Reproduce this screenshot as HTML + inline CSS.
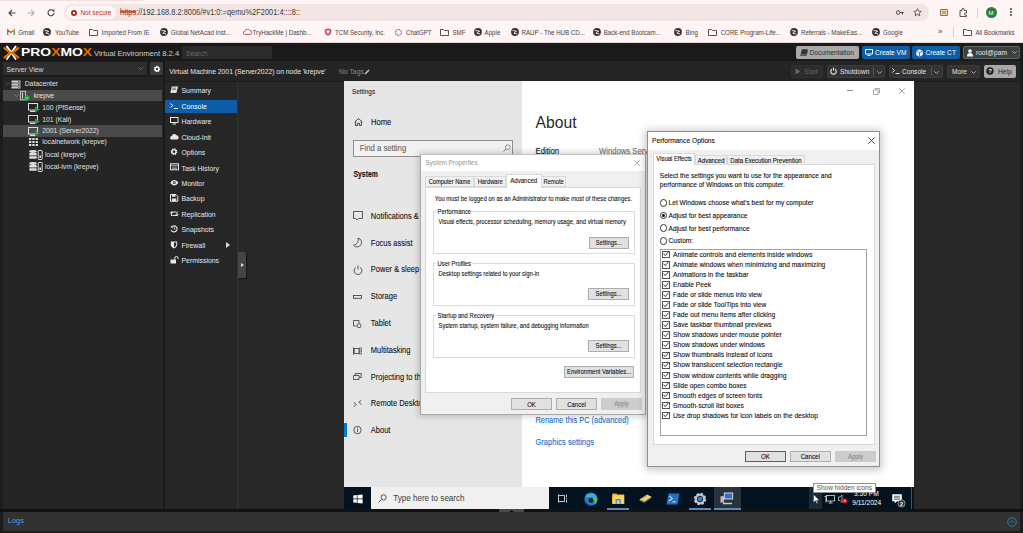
<!DOCTYPE html>
<html><head><meta charset="utf-8">
<style>
*{margin:0;padding:0;box-sizing:border-box}
html,body{width:1023px;height:533px;overflow:hidden;background:#1b1b1b;font-family:"Liberation Sans",sans-serif}
.a{position:absolute}
.t{position:absolute;white-space:nowrap;line-height:1}
.d{-webkit-text-stroke:0.1px currentColor}
.y{transform:scaleY(1.2);transform-origin:0 85%}
.e{-webkit-text-stroke:0.08px currentColor}
svg{position:absolute;overflow:visible}
</style></head><body>

<!-- ================= CHROME ================= -->
<div class="a" style="left:0;top:0;width:1023px;height:43px;background:#fef5f4"></div>
<div class="a" style="left:0;top:0;width:143px;height:1px;background:#f6dcda"></div>
<div class="a" style="left:0;top:42px;width:1023px;height:1px;background:#e8d9d8"></div>
<!-- nav icons -->
<svg style="left:8px;top:9px" width="8" height="8" viewBox="0 0 8 8"><path d="M7.5 4H1M4 1L1 4l3 3" stroke="#4a4142" stroke-width="1.1" fill="none"/></svg>
<svg style="left:27px;top:9px" width="8" height="8" viewBox="0 0 8 8"><path d="M0.5 4H7M4 1l3 3-3 3" stroke="#b9aeae" stroke-width="1.1" fill="none"/></svg>
<svg style="left:47px;top:9px" width="8" height="8" viewBox="0 0 8 8"><path d="M6.6 2.2A3 3 0 1 0 7 4.2" stroke="#4a4142" stroke-width="1.1" fill="none"/><path d="M4.8 0.8h2.6v2.6z" fill="#4a4142"/></svg>
<!-- address pill -->
<div class="a" style="left:64px;top:4px;width:865px;height:17px;border-radius:9px;background:#f3e5e4"></div>
<div class="a" style="left:66px;top:6px;width:50px;height:13px;border-radius:7px;background:#fdf6f5"></div>
<div class="a" style="left:71px;top:10px;width:6px;height:6px;border-radius:50%;background:#b3261e"></div>
<div class="a" style="left:73px;top:12px;width:2px;height:2px;background:#fdf6f5"></div>
<div class="t y" style="left:80.5px;top:10px;font-size:6.4px;color:#b3261e">Not secure</div>
<div class="t y" style="left:120px;top:9px;font-size:7.45px;color:#3a3a3a"><span style="color:#b3261e;text-decoration:line-through">https</span>://192.168.8.2:8006/#v1:0:=qemu%2F2001:4::::8::</div>
<!-- toolbar right icons -->
<svg style="left:896px;top:9px" width="8" height="7" viewBox="0 0 8 7"><circle cx="2.2" cy="3.5" r="1.8" stroke="#4a4142" stroke-width="1" fill="none"/><path d="M4 3.5h3.6M6.5 3.5v2" stroke="#4a4142" stroke-width="1"/></svg>
<svg style="left:913px;top:8px" width="9" height="9" viewBox="0 0 10 10"><path d="M5 0.8l1.2 2.7 2.9.3-2.2 1.9.7 2.9L5 7.1 2.4 8.6l.7-2.9L0.9 3.8l2.9-.3z" stroke="#4a4142" stroke-width="0.9" fill="none"/></svg>
<div class="a" style="left:940px;top:9px;width:8px;height:7px;border:1px solid #7a6e6e;border-radius:1px;background:#f0d8d0"></div>
<div class="a" style="left:942px;top:11px;width:4px;height:3px;background:#e0a040"></div>
<svg style="left:959px;top:8px" width="9" height="9" viewBox="0 0 9 9"><path d="M1 2.5h2V1.2a1 1 0 0 1 2 0V2.5h2.5V5H6.3a1 1 0 0 0 0 2H7.5v1.5H1z" stroke="#4a4142" stroke-width="0.9" fill="none"/></svg>
<div class="a" style="left:977px;top:8px;width:1px;height:10px;background:#e6caca"></div>
<div class="a" style="left:986px;top:7px;width:11px;height:11px;border-radius:50%;background:#2e7d32"></div>
<div class="t" style="left:988.5px;top:9.5px;font-size:6px;color:#fff">M</div>
<div class="a" style="left:1010px;top:8px;width:2px;height:2px;border-radius:50%;background:#4a4142;box-shadow:0 3px 0 #4a4142,0 6px 0 #4a4142"></div>

<!-- bookmarks -->
<svg style="left:6.5px;top:29px" width="8" height="6" viewBox="0 0 8 6"><path d="M.6 6V1l3.4 2.6L7.4 1v5" stroke="#ea4335" stroke-width="1.2" fill="none"/><path d="M.6 6V1.2" stroke="#4285f4" stroke-width="1.2"/><path d="M7.4 6V1.2" stroke="#34a853" stroke-width="1.2"/><path d="M7.4 1.2L6 2.3" stroke="#fbbc04" stroke-width="1.2"/></svg>
<div class="t y" style="left:18.3px;top:29.6px;font-size:6.15px;color:#4a4040">Gmail</div>
<svg style="left:43.4px;top:28px" width="8" height="8" viewBox="0 0 8 8"><circle cx="4" cy="4" r="3.9" fill="#3a3232"/><path d="M1.6 2.6C3 2.6 4.6 2.6 5.6 3.4 4.2 4 2.8 4.3 3 5.3c1 .4 2.2.1 3.2.8" stroke="#fef5f4" stroke-width="1" fill="none"/></svg>
<div class="t y" style="left:54.9px;top:29.6px;font-size:6.15px;color:#4a4040">YouTube</div>
<svg style="left:88.7px;top:28.5px" width="9" height="7" viewBox="0 0 9 7"><path d="M.5 .5h3l1 1h4v5H.5z" stroke="#4a4142" stroke-width=".9" fill="none"/></svg>
<div class="t y" style="left:101.6px;top:29.6px;font-size:6.15px;color:#4a4040">Imported From IE</div>
<svg style="left:160px;top:28px" width="8" height="8" viewBox="0 0 8 8"><circle cx="4" cy="4" r="3.9" fill="#3a3232"/><path d="M1.6 2.6C3 2.6 4.6 2.6 5.6 3.4 4.2 4 2.8 4.3 3 5.3c1 .4 2.2.1 3.2.8" stroke="#fef5f4" stroke-width="1" fill="none"/></svg>
<div class="t y" style="left:170.8px;top:29.6px;font-size:6.15px;color:#4a4040">Global NetAcad Inst...</div>
<svg style="left:242.6px;top:28px" width="9" height="8" viewBox="0 0 9 8"><path d="M2 6.5a1.6 1.6 0 0 1 0-3.2A2.4 2.4 0 0 1 6.6 2.6 1.9 1.9 0 0 1 7 6.5z" stroke="#c2485a" stroke-width=".9" fill="none"/></svg>
<div class="t y" style="left:252.6px;top:29.6px;font-size:6.15px;color:#4a4040">TryHackMe | Dashb...</div>
<svg style="left:324px;top:28px" width="8" height="8" viewBox="0 0 8 8"><path d="M4 .4l3.2 1.2v2.2c0 2-1.4 3.3-3.2 3.9C2.2 7.1.8 5.8.8 3.8V1.6z" fill="#d04060"/><path d="M4 2l1.6.6v1.2c0 1-.7 1.7-1.6 2-.9-.3-1.6-1-1.6-2V2.6z" fill="#fde"/></svg>
<div class="t y" style="left:335px;top:29.6px;font-size:6.15px;color:#4a4040">TCM Security, Inc.</div>
<svg style="left:395px;top:28.5px" width="7" height="7" viewBox="0 0 7 7"><circle cx="3.5" cy="3.5" r="3" fill="none" stroke="#777" stroke-width="1.2" stroke-dasharray="1.5 .8"/></svg>
<div class="t y" style="left:406px;top:29.6px;font-size:6.15px;color:#4a4040">ChatGPT</div>
<svg style="left:439.5px;top:28.5px" width="9" height="7" viewBox="0 0 9 7"><path d="M.5 .5h3l1 1h4v5H.5z" stroke="#4a4142" stroke-width=".9" fill="none"/></svg>
<div class="t y" style="left:452.5px;top:29.6px;font-size:6.15px;color:#4a4040">SMF</div>
<svg style="left:473.7px;top:28px" width="8" height="8" viewBox="0 0 8 8"><circle cx="4" cy="4" r="3.9" fill="#3a3232"/><path d="M1.6 2.6C3 2.6 4.6 2.6 5.6 3.4 4.2 4 2.8 4.3 3 5.3c1 .4 2.2.1 3.2.8" stroke="#fef5f4" stroke-width="1" fill="none"/></svg>
<div class="t y" style="left:484.6px;top:29.6px;font-size:6.15px;color:#4a4040">Apple</div>
<svg style="left:510.6px;top:28px" width="8" height="8" viewBox="0 0 8 8"><circle cx="4" cy="4" r="3.9" fill="#3a3232"/><path d="M1.6 2.6C3 2.6 4.6 2.6 5.6 3.4 4.2 4 2.8 4.3 3 5.3c1 .4 2.2.1 3.2.8" stroke="#fef5f4" stroke-width="1" fill="none"/></svg>
<div class="t y" style="left:521.6px;top:29.6px;font-size:6.15px;color:#4a4040">RAUP - The HUB CD...</div>
<svg style="left:592.7px;top:28px" width="8" height="8" viewBox="0 0 8 8"><circle cx="4" cy="4" r="3.9" fill="#3a3232"/><path d="M1.6 2.6C3 2.6 4.6 2.6 5.6 3.4 4.2 4 2.8 4.3 3 5.3c1 .4 2.2.1 3.2.8" stroke="#fef5f4" stroke-width="1" fill="none"/></svg>
<div class="t y" style="left:603.7px;top:29.6px;font-size:6.15px;color:#4a4040">Back-end Bootcam...</div>
<svg style="left:673.8px;top:28px" width="8" height="8" viewBox="0 0 8 8"><circle cx="4" cy="4" r="3.9" fill="#3a3232"/><path d="M1.6 2.6C3 2.6 4.6 2.6 5.6 3.4 4.2 4 2.8 4.3 3 5.3c1 .4 2.2.1 3.2.8" stroke="#fef5f4" stroke-width="1" fill="none"/></svg>
<div class="t y" style="left:685.5px;top:29.6px;font-size:6.15px;color:#4a4040">Bing</div>
<svg style="left:708px;top:28.5px" width="9" height="7" viewBox="0 0 9 7"><path d="M.5 .5h3l1 1h4v5H.5z" stroke="#4a4142" stroke-width=".9" fill="none"/></svg>
<div class="t y" style="left:720.7px;top:29.6px;font-size:6.15px;color:#4a4040">CORE Program-Life...</div>
<svg style="left:789.7px;top:28px" width="8" height="8" viewBox="0 0 8 8"><circle cx="4" cy="4" r="3.9" fill="#3a3232"/><path d="M1.6 2.6C3 2.6 4.6 2.6 5.6 3.4 4.2 4 2.8 4.3 3 5.3c1 .4 2.2.1 3.2.8" stroke="#fef5f4" stroke-width="1" fill="none"/></svg>
<div class="t y" style="left:801px;top:29.6px;font-size:6.15px;color:#4a4040">Referrals - MakeEas...</div>
<svg style="left:871.9px;top:28px" width="8" height="8" viewBox="0 0 8 8"><circle cx="4" cy="4" r="3.9" fill="#3a3232"/><path d="M1.6 2.6C3 2.6 4.6 2.6 5.6 3.4 4.2 4 2.8 4.3 3 5.3c1 .4 2.2.1 3.2.8" stroke="#fef5f4" stroke-width="1" fill="none"/></svg>
<div class="t y" style="left:883px;top:29.6px;font-size:6.15px;color:#4a4040">Google</div>
<svg style="left:962.6px;top:28.5px" width="9" height="7" viewBox="0 0 9 7"><path d="M.5 .5h3l1 1h4v5H.5z" stroke="#4a4142" stroke-width=".9" fill="none"/></svg>
<div class="t y" style="left:975.4px;top:29.6px;font-size:6.15px;color:#4a4040">All Bookmarks</div>
<div class="t" style="left:938px;top:28px;font-size:8px;color:#4a4142">&raquo;</div>
<div class="a" style="left:953px;top:27px;width:1px;height:10px;background:#e6caca"></div>

<!-- ================= PROXMOX ================= -->
<div class="a" style="left:0;top:43px;width:1023px;height:18px;background:#1a1a1a"></div>


<!-- logo -->
<svg style="left:0;top:42px" width="22" height="20" viewBox="0 0 22 20">
 <path d="M7 4.6L11.3 10.5 7 17M15.6 4.6L11.3 10.5 15.6 17" stroke="#fff" stroke-width="1.9" fill="none" stroke-linecap="round"/>
 <path d="M4.6 6.2L10.4 10.8 4.6 15.4M18.2 6.2L12.3 10.8 18.2 15.4" stroke="#e57000" stroke-width="2.3" fill="none" stroke-linecap="round"/>
</svg>
<div class="t" style="left:21px;top:46.3px;font-size:11.6px;font-weight:bold;color:#fff;transform:scaleX(1.2);transform-origin:0 0">PRO<span style="color:#e57000">X</span>MO<span style="color:#e57000">X</span></div>
<div class="t" style="left:94px;top:49.8px;font-size:7.6px;color:#d0d0d0">Virtual Environment 8.2.4</div>
<div class="a" style="left:182px;top:46px;width:90px;height:13px;background:#2b2b2b;border-radius:1px"></div>
<div class="t" style="left:186px;top:50.8px;font-size:6.8px;color:#6a6a6a">Search</div>
<!-- header buttons -->
<div class="a" style="left:796px;top:46px;width:63px;height:13px;background:#a9a9a9;border-radius:2px"></div>
<svg style="left:800px;top:49px" width="8" height="7" viewBox="0 0 8 7"><path d="M2 .3h5.7L6.3 5.5H.6z" fill="#333"/><path d="M.6 5.5v1h5.7l1.4-5.2" stroke="#333" stroke-width=".7" fill="none"/></svg>
<div class="t" style="left:809.5px;top:49.5px;font-size:6.6px;color:#2a2a2a">Documentation</div>
<div class="a" style="left:861.5px;top:46px;width:48px;height:13px;background:#0d5ea8;border-radius:2px"></div>
<svg style="left:865px;top:49px" width="8" height="7" viewBox="0 0 8 7"><path d="M.5.5h7v4.5h-7z" stroke="#fff" stroke-width="1" fill="none"/><path d="M2.5 6.5h3" stroke="#fff" stroke-width="1"/></svg>
<div class="t" style="left:875px;top:49.5px;font-size:6.6px;color:#fff">Create VM</div>
<div class="a" style="left:912px;top:46px;width:48px;height:13px;background:#0d5ea8;border-radius:2px"></div>
<svg style="left:915.5px;top:48.5px" width="7" height="8" viewBox="0 0 7 8"><path d="M3.5.3L6.7 2v4L3.5 7.7.3 6V2z" fill="#fff"/><path d="M.5 2.1l3 1.6 3-1.6M3.5 3.7v3.8" stroke="#0d5ea8" stroke-width=".8" fill="none"/></svg>
<div class="t" style="left:925.5px;top:49.5px;font-size:6.6px;color:#fff">Create CT</div>
<div class="a" style="left:963px;top:46px;width:57px;height:13px;background:#3a4342;border:1px solid #5d6767;border-radius:2px"></div>
<svg style="left:967px;top:48.5px" width="6" height="8" viewBox="0 0 6 8"><circle cx="3" cy="2" r="1.8" fill="#fff"/><path d="M0 7.5c0-2.5 1-3.5 3-3.5s3 1 3 3.5z" fill="#fff"/></svg>
<div class="t" style="left:976px;top:49.5px;font-size:6.6px;color:#e5e5e5">root@pam</div>
<svg style="left:1012px;top:51px" width="5" height="3" viewBox="0 0 5 3"><path d="M.3.3L2.5 2.5 4.7.3" stroke="#ccc" stroke-width=".8" fill="none"/></svg>

<!-- left tree panel -->
<div class="a" style="left:0;top:61px;width:164px;height:448px;background:#1c1c1c"></div>
<div class="a" style="left:163px;top:61px;width:2px;height:448px;background:#1a1a1a"></div>
<div class="a" style="left:3px;top:62px;width:144px;height:13px;background:#2e2e2e"></div>
<div class="t" style="left:6.5px;top:66.7px;font-size:6.9px;color:#ddd">Server View</div>
<svg style="left:138px;top:67px" width="5" height="3" viewBox="0 0 5 3"><path d="M.3.3L2.5 2.5 4.7.3" stroke="#777" stroke-width=".8" fill="none"/></svg>
<div class="a" style="left:150px;top:62px;width:13px;height:13px;background:#3a3a3a;border-radius:1px"></div>
<svg style="left:152.5px;top:64.5px" width="8" height="8" viewBox="0 0 8 8"><circle cx="4" cy="4" r="2.4" stroke="#fff" stroke-width="1.6" stroke-dasharray="1 .88" fill="none"/><circle cx="4" cy="4" r="1.9" stroke="#fff" stroke-width="1.2" fill="none"/></svg>
<div class="a" style="left:3px;top:77px;width:160px;height:432px;background:#252525"></div>


<!-- tree rows -->
<div class="a" style="left:3px;top:89.5px;width:159px;height:11.8px;background:#4a4a4a"></div>
<div class="a" style="left:3px;top:125px;width:159px;height:11.8px;background:#4a4a4a"></div>
<svg style="left:5px;top:82px" width="5" height="3" viewBox="0 0 5 3"><path d="M.3.3L2.5 2.5 4.7.3" stroke="#666" stroke-width=".7" fill="none"/></svg>
<svg style="left:11px;top:79.8px" width="10" height="9" viewBox="0 0 10 9"><rect x=".5" y=".5" width="9" height="2.2" fill="#ccc"/><rect x=".5" y="3.4" width="9" height="2.2" fill="#ccc"/><rect x=".5" y="6.3" width="9" height="2.2" fill="#ccc"/><path d="M7 1.6h1.5M7 4.5h1.5M7 7.4h1.5" stroke="#333" stroke-width=".8"/></svg>
<div class="t" style="left:24.7px;top:81.00px;font-size:6.8px;color:#e0e0e0">Datacenter</div>
<svg style="left:14px;top:94px" width="5" height="3" viewBox="0 0 5 3"><path d="M.3.3L2.5 2.5 4.7.3" stroke="#888" stroke-width=".7" fill="none"/></svg>
<svg style="left:20px;top:91px" width="10" height="10" viewBox="0 0 10 10"><rect x=".5" y=".3" width="5" height="8.5" fill="none" stroke="#ccc" stroke-width=".9"/><rect x="2" y="1.5" width="1" height="6" fill="#ccc"/><circle cx="6.8" cy="7" r="2.7" fill="#21a63e"/><path d="M5.6 7l.9.9 1.5-1.7" stroke="#fff" stroke-width=".7" fill="none"/></svg>
<div class="t" style="left:33.7px;top:93.3px;font-size:6.8px;color:#e8e8e8">krepve</div>
<svg style="left:28px;top:103.2px" width="13" height="10" viewBox="0 0 13 10"><rect x=".5" y=".5" width="9" height="6.5" fill="none" stroke="#ddd" stroke-width="1"/><rect x="2" y="7.8" width="6" height="1.2" fill="#ddd"/><path d="M7 3.5L12 6.5 7 9.5z" fill="#21a63e"/></svg>
<div class="t" style="left:42.2px;top:104.70px;font-size:6.8px;color:#e0e0e0">100 (PfSense)</div><svg style="left:28px;top:115.1px" width="13" height="10" viewBox="0 0 13 10"><rect x=".5" y=".5" width="9" height="6.5" fill="none" stroke="#ddd" stroke-width="1"/><rect x="2" y="7.8" width="6" height="1.2" fill="#ddd"/><path d="M7 3.5L12 6.5 7 9.5z" fill="#21a63e"/></svg>
<div class="t" style="left:42.2px;top:116.60px;font-size:6.8px;color:#e0e0e0">101 (Kali)</div><svg style="left:28px;top:126.6px" width="13" height="10" viewBox="0 0 13 10"><rect x=".5" y=".5" width="9" height="6.5" fill="none" stroke="#ddd" stroke-width="1"/><rect x="2" y="7.8" width="6" height="1.2" fill="#ddd"/><path d="M7 3.5L12 6.5 7 9.5z" fill="#21a63e"/></svg>
<div class="t" style="left:42.2px;top:128.10px;font-size:6.8px;color:#e0e0e0">2001 (Server2022)</div>
<svg style="left:29px;top:138px" width="9" height="8" viewBox="0 0 9 8"><g fill="#ddd"><rect x="0" y="0" width="2.3" height="2"/><rect x="3.3" y="0" width="2.3" height="2"/><rect x="6.6" y="0" width="2.3" height="2"/><rect x="0" y="3" width="2.3" height="2"/><rect x="3.3" y="3" width="2.3" height="2"/><rect x="6.6" y="3" width="2.3" height="2"/><rect x="0" y="6" width="2.3" height="2"/><rect x="3.3" y="6" width="2.3" height="2"/><rect x="6.6" y="6" width="2.3" height="2"/></g></svg>
<div class="t" style="left:42.2px;top:139.40px;font-size:6.8px;color:#e0e0e0">localnetwork (krepve)</div>
<svg style="left:29px;top:149.7px" width="14" height="10" viewBox="0 0 14 10"><g fill="#ddd"><ellipse cx="4" cy="1.5" rx="3.8" ry="1.4"/><rect x=".2" y="3" width="7.6" height="2.5" rx="1"/><rect x=".2" y="6.3" width="7.6" height="2.5" rx="1"/></g><rect x="9.2" y=".5" width="4" height="9" rx=".6" fill="none" stroke="#ddd" stroke-width="1"/><rect x="10.4" y="5.5" width="1.6" height="2.5" fill="#ddd"/></svg>
<div class="t" style="left:45px;top:152.00px;font-size:6.8px;color:#e0e0e0">local (krepve)</div><svg style="left:29px;top:161.5px" width="14" height="10" viewBox="0 0 14 10"><g fill="#ddd"><ellipse cx="4" cy="1.5" rx="3.8" ry="1.4"/><rect x=".2" y="3" width="7.6" height="2.5" rx="1"/><rect x=".2" y="6.3" width="7.6" height="2.5" rx="1"/></g><rect x="9.2" y=".5" width="4" height="9" rx=".6" fill="none" stroke="#ddd" stroke-width="1"/><rect x="10.4" y="5.5" width="1.6" height="2.5" fill="#ddd"/></svg>
<div class="t" style="left:45px;top:163.80px;font-size:6.8px;color:#e0e0e0">local-lvm (krepve)</div>
<!-- content header -->
<div class="a" style="left:165px;top:61px;width:858px;height:20px;background:#242424"></div>
<div class="t" style="left:169.2px;top:68.9px;font-size:6.8px;color:#e8e8e8">Virtual Machine 2001 (Server2022) on node 'krepve'</div>
<div class="t" style="left:339px;top:68.9px;font-size:6.8px;color:#8a8a8a">No Tags</div>
<svg style="left:364px;top:68.5px" width="6" height="6" viewBox="0 0 6 6"><path d="M.5 5.5l.4-1.6L4.4.4l1.2 1.2L2.1 5.1z" fill="#bbb"/></svg>
<!-- toolbar buttons -->
<div class="a" style="left:791px;top:65px;width:32px;height:13px;background:#2c2c2c;border:1px solid #303030;border-radius:2px"></div>
<svg style="left:795px;top:68px" width="6" height="7" viewBox="0 0 6 7"><path d="M.5.5L5.5 3.5.5 6.5z" fill="#666"/></svg>
<div class="t" style="left:804px;top:69px;font-size:6.6px;color:#666">Start</div>
<div class="a" style="left:827px;top:65px;width:58px;height:13px;background:#333;border:1px solid #3c3c3c;border-radius:2px"></div>
<svg style="left:830px;top:67.3px" width="7" height="8" viewBox="0 0 7 8"><path d="M1.9 2.3a2.7 2.7 0 1 0 3.2 0" stroke="#eee" stroke-width="1.1" fill="none"/><path d="M3.5.5v3.2" stroke="#eee" stroke-width="1.1"/></svg>
<div class="t" style="left:840px;top:69px;font-size:6.6px;color:#e5e5e5">Shutdown</div>
<div class="a" style="left:873px;top:67px;width:1px;height:9px;background:#555"></div>
<svg style="left:876.5px;top:70.5px" width="5" height="3" viewBox="0 0 5 3"><path d="M.3.3L2.5 2.5 4.7.3" stroke="#ccc" stroke-width=".8" fill="none"/></svg>
<div class="a" style="left:889px;top:65px;width:54px;height:13px;background:#333;border:1px solid #3c3c3c;border-radius:2px"></div>
<svg style="left:892px;top:68px" width="8" height="6" viewBox="0 0 8 6"><path d="M.3.5L2.6 2.5.3 4.5" stroke="#eee" stroke-width=".9" fill="none"/><path d="M3.5 5.5h4" stroke="#eee" stroke-width=".9"/></svg>
<div class="t" style="left:902px;top:69px;font-size:6.6px;color:#e5e5e5">Console</div>
<div class="a" style="left:930.5px;top:67px;width:1px;height:9px;background:#555"></div>
<svg style="left:934px;top:70.5px" width="5" height="3" viewBox="0 0 5 3"><path d="M.3.3L2.5 2.5 4.7.3" stroke="#ccc" stroke-width=".8" fill="none"/></svg>
<div class="a" style="left:947px;top:65px;width:33px;height:13px;background:#333;border:1px solid #3c3c3c;border-radius:2px"></div>
<div class="t" style="left:952px;top:69px;font-size:6.6px;color:#e5e5e5">More</div>
<svg style="left:970.5px;top:70.5px" width="5" height="3" viewBox="0 0 5 3"><path d="M.3.3L2.5 2.5 4.7.3" stroke="#ccc" stroke-width=".8" fill="none"/></svg>
<div class="a" style="left:984px;top:65px;width:32px;height:13px;background:#a9a9a9;border-radius:2px"></div>
<svg style="left:986.3px;top:66.8px" width="8" height="8" viewBox="0 0 8 8"><circle cx="4" cy="4" r="3.7" fill="#222"/><text x="4" y="6.3" font-size="6" font-weight="bold" text-anchor="middle" fill="#eee" font-family="Liberation Sans">?</text></svg>
<div class="t" style="left:998px;top:69px;font-size:6.6px;color:#2a2a2a">Help</div>

<!-- menu panel -->
<div class="a" style="left:165px;top:81px;width:858px;height:1px;background:#1c1c1c"></div>
<div class="a" style="left:165px;top:82px;width:72px;height:427px;background:#262626"></div>
<div class="a" style="left:237px;top:82px;width:1px;height:427px;background:#333"></div>
<div class="a" style="left:238px;top:82px;width:782px;height:427px;background:#282828"></div>
<div class="a" style="left:1020px;top:61px;width:3px;height:472px;background:#1c1c1c"></div>
<div class="a" style="left:165px;top:99.5px;width:72px;height:13px;background:#0d5ea8"></div>
<div class="a" style="left:238px;top:252px;width:8px;height:26px;background:#454545;border-radius:0 2px 2px 0;box-shadow:1px 1px 1px #151515"></div>
<svg style="left:241px;top:263px" width="3" height="4" viewBox="0 0 3 4"><path d="M0 0L3 2 0 4z" fill="#ddd"/></svg>
<div class="t" style="left:181.5px;top:88.40px;font-size:6.9px;color:#e8e8e8">Summary</div>
<div class="t" style="left:181.5px;top:103.5px;font-size:6.9px;color:#fff">Console</div>
<div class="t" style="left:181.5px;top:119.26px;font-size:6.9px;color:#e8e8e8">Hardware</div>
<div class="t" style="left:181.5px;top:134.69px;font-size:6.9px;color:#e8e8e8">Cloud-Init</div>
<div class="t" style="left:181.5px;top:150.12px;font-size:6.9px;color:#e8e8e8">Options</div>
<div class="t" style="left:181.5px;top:165.55px;font-size:6.9px;color:#e8e8e8">Task History</div>
<div class="t" style="left:181.5px;top:180.98px;font-size:6.9px;color:#e8e8e8">Monitor</div>
<div class="t" style="left:181.5px;top:196.41px;font-size:6.9px;color:#e8e8e8">Backup</div>
<div class="t" style="left:181.5px;top:211.84px;font-size:6.9px;color:#e8e8e8">Replication</div>
<div class="t" style="left:181.5px;top:227.27px;font-size:6.9px;color:#e8e8e8">Snapshots</div>
<div class="t" style="left:181.5px;top:242.70px;font-size:6.9px;color:#e8e8e8">Firewall</div>
<div class="t" style="left:181.5px;top:258.13px;font-size:6.9px;color:#e8e8e8">Permissions</div>
<svg style="left:170px;top:86.30px" width="9" height="8" viewBox="0 0 9 8"><path d="M1.8.5h5.7l-1.3 6H.5z" fill="#e8e8e8"/><path d="M.5 6.5h5.7L7.5.5" stroke="#e8e8e8" stroke-width=".8" fill="none"/><path d="M2.5 2.2h3.5M2.2 3.6h3.5" stroke="#262626" stroke-width=".6"/></svg>
<svg style="left:170px;top:101.73px" width="9" height="8" viewBox="0 0 9 8"><path d="M.3 1.5L2.8 3.5.3 5.5" stroke="#fff" stroke-width=".9" fill="none"/><path d="M3.8 6.5h4.2" stroke="#fff" stroke-width=".9"/></svg>
<svg style="left:170px;top:117.16px" width="9" height="8" viewBox="0 0 9 8"><rect x=".5" y=".5" width="7.5" height="5" fill="none" stroke="#e8e8e8" stroke-width="1"/><path d="M2.5 7h3.5" stroke="#e8e8e8" stroke-width="1"/></svg>
<svg style="left:170px;top:132.59px" width="9" height="8" viewBox="0 0 9 8"><path d="M2 6.5a1.7 1.7 0 0 1-.2-3.4A2.4 2.4 0 0 1 6.3 2.3 2.1 2.1 0 0 1 6.8 6.5z" fill="#e8e8e8"/></svg>
<svg style="left:170px;top:148.02px" width="9" height="8" viewBox="0 0 9 8"><circle cx="4" cy="3.7" r="2.5" stroke="#e8e8e8" stroke-width="1.8" stroke-dasharray="1.1 .85" fill="none"/><circle cx="4" cy="3.7" r="2" stroke="#e8e8e8" stroke-width="1.3" fill="none"/></svg>
<svg style="left:170px;top:163.45px" width="9" height="8" viewBox="0 0 9 8"><rect x=".5" y=".8" width="8" height="6" fill="none" stroke="#e8e8e8" stroke-width="1"/><path d="M.5 2.4h8M2 4h5M2 5.4h5" stroke="#e8e8e8" stroke-width=".6"/></svg>
<svg style="left:170px;top:178.88px" width="9" height="8" viewBox="0 0 9 8"><path d="M.3 3.7C1.5 1.8 2.8 1 4.3 1s2.8.8 4 2.7C7.1 5.6 5.8 6.4 4.3 6.4S1.5 5.6.3 3.7z" fill="#e8e8e8"/><circle cx="4.3" cy="3.7" r="1.4" fill="#262626"/><circle cx="4.3" cy="3.7" r=".6" fill="#e8e8e8"/></svg>
<svg style="left:170px;top:194.31px" width="9" height="8" viewBox="0 0 9 8"><path d="M.5.5h5.5l1.8 1.8v5H.5z" fill="none" stroke="#e8e8e8" stroke-width="1"/><rect x="2" y=".8" width="3.5" height="2" fill="#e8e8e8"/><rect x="2" y="4.5" width="4.3" height="2.5" fill="#e8e8e8"/></svg>
<svg style="left:170px;top:209.74px" width="9" height="8" viewBox="0 0 9 8"><path d="M1.5 6V2h4.5M7 1.5v4H2.5" stroke="#e8e8e8" stroke-width="1.1" fill="none"/><path d="M.2 3.3L1.5 1.8 2.8 3.3M5.7 4.2L7 5.7 8.3 4.2" stroke="#e8e8e8" stroke-width="1" fill="none"/></svg>
<svg style="left:170px;top:225.17px" width="9" height="8" viewBox="0 0 9 8"><path d="M1.6 2.2A3 3 0 1 1 1.2 4.8" stroke="#e8e8e8" stroke-width="1.1" fill="none"/><path d="M.2 1.2l2.4.1-.2 2.2z" fill="#e8e8e8"/><path d="M4.3 2.2v1.8l1.2.8" stroke="#e8e8e8" stroke-width=".8" fill="none"/></svg>
<svg style="left:170px;top:240.60px" width="9" height="8" viewBox="0 0 9 8"><path d="M.8.5h6.4v3c0 1.9-1.5 3.3-3.2 4-1.7-.7-3.2-2.1-3.2-4z" fill="#e8e8e8"/><path d="M4 1.5h2.2v2c0 1.2-1 2.2-2.2 2.8z" fill="#262626"/></svg>
<svg style="left:170px;top:256.03px" width="9" height="8" viewBox="0 0 9 8"><rect x=".5" y="3.5" width="5.5" height="4" fill="#e8e8e8"/><path d="M4.8 3.5V2a1.6 1.6 0 0 1 3.2 0v1" stroke="#e8e8e8" stroke-width="1" fill="none"/></svg>

<svg style="left:225.5px;top:242px" width="4" height="6" viewBox="0 0 4 6"><path d="M0 0L4 3 0 6z" fill="#ddd"/></svg>

<!-- logs bar -->
<div class="a" style="left:0;top:509px;width:1023px;height:3px;background:#111"></div>
<div class="a" style="left:0;top:512px;width:3px;height:19px;background:#1c1c1c"></div><div class="a" style="left:3px;top:512px;width:1017px;height:19px;background:#323232"></div>
<div class="a" style="left:0;top:531px;width:1023px;height:2px;background:#1c1c1c"></div>
<div class="a" style="left:499px;top:509px;width:25px;height:3px;background:#4a4a4a;border-radius:0 0 1px 1px"></div>
<svg style="left:509px;top:510px" width="5" height="2" viewBox="0 0 5 2"><path d="M0 2L2.5 0 5 2z" fill="#111"/></svg>
<div class="t" style="left:7.8px;top:517px;font-size:7.4px;color:#43a0dc">Logs</div>
<svg style="left:1006.5px;top:516.5px" width="10" height="10" viewBox="0 0 10 10"><circle cx="5" cy="5" r="4.3" stroke="#2f86c0" stroke-width="0.9" fill="none"/><path d="M2.8 5.8L5 3.6 7.2 5.8" stroke="#2f86c0" stroke-width="0.9" fill="none"/></svg>

<!-- ================= VM DISPLAY ================= -->
<div class="a" style="left:344px;top:81px;width:570px;height:406px;background:#fff;overflow:hidden">
 <div class="a" style="left:0;top:0;width:178px;height:406px;background:#e6e6e6"></div>
</div>
<div class="t e" style="left:352px;top:88.8px;font-size:6.4px;color:#1a1a1a">Settings</div>
<div class="a" style="left:847px;top:90.3px;width:6px;height:0.8px;background:#888"></div>
<svg style="left:872.5px;top:87.5px" width="7" height="7" viewBox="0 0 7 7"><path d="M.5 2h4.5v4.5H.5zM2 2V.5h4.5V5H5" stroke="#888" stroke-width=".7" fill="none"/></svg>
<svg style="left:898.5px;top:87.8px" width="6" height="6" viewBox="0 0 6 6"><path d="M.2.2l5.6 5.6M5.8.2L.2 5.8" stroke="#888" stroke-width=".75"/></svg>
<!-- home -->
<svg style="left:353.5px;top:118px" width="9" height="8" viewBox="0 0 9 8"><path d="M.6 4L4.5.6 8.4 4M1.6 3.2v4.3h2V5.3h1.8v2.2h2V3.2" stroke="#222" stroke-width=".8" fill="none"/></svg>
<div class="t d y" style="left:371px;top:119.1px;font-size:7.6px;color:#111">Home</div>
<div class="a" style="left:353px;top:139.5px;width:160px;height:17px;border:1.3px solid #8f8f8f;background:#f2f2f2"></div>
<div class="t d y" style="left:359.7px;top:144.8px;font-size:7.75px;color:#666">Find a setting</div>
<svg style="left:503px;top:144px" width="8" height="8" viewBox="0 0 8 8"><circle cx="4.8" cy="3.2" r="2.4" stroke="#666" stroke-width=".7" fill="none"/><path d="M3.1 4.9L.5 7.5" stroke="#666" stroke-width=".8"/></svg>
<div class="t d y" style="left:353.5px;top:171.8px;font-size:6.85px;font-weight:bold;color:#111">System</div>
<svg style="left:352.5px;top:211px" width="10" height="10" viewBox="0 0 10 10"><path d="M.5.5h9v7H5.5L4 9 2.5 7.5h-2z" stroke="#333" stroke-width=".8" fill="none"/></svg>
<div class="t e y" style="left:370.8px;top:213.1px;font-size:7.5px;color:#111">Notifications &</div>
<svg style="left:352px;top:237px" width="11" height="11" viewBox="0 0 11 11"><path d="M6 1A4.5 4.5 0 1 1 1.6 8.3 5.6 5.6 0 0 0 6 1z" stroke="#333" stroke-width=".8" fill="none"/></svg>
<div class="t e y" style="left:370.8px;top:240.1px;font-size:7.5px;color:#111">Focus assist</div>
<svg style="left:352.5px;top:265px" width="10" height="10" viewBox="0 0 10 10"><path d="M2.9 2.3a3.9 3.9 0 1 0 4.2 0" stroke="#333" stroke-width=".8" fill="none"/><path d="M5 .3v4.2" stroke="#333" stroke-width=".8"/></svg>
<div class="t e y" style="left:370.8px;top:266.4px;font-size:7.5px;color:#111">Power &amp; sleep</div>
<svg style="left:353px;top:292.5px" width="9" height="8" viewBox="0 0 9 8"><rect x=".5" y="2.5" width="8" height="2.8" stroke="#333" stroke-width=".8" fill="none"/></svg>
<div class="t e y" style="left:370.8px;top:293.1px;font-size:7.5px;color:#111">Storage</div>
<svg style="left:353px;top:319.5px" width="9" height="8" viewBox="0 0 9 8"><path d="M6 3.2V.5H.5V6h3" stroke="#333" stroke-width=".8" fill="none"/><circle cx="6" cy="5.7" r="2" stroke="#333" stroke-width=".8" fill="none"/></svg>
<div class="t e y" style="left:370.8px;top:320.1px;font-size:7.5px;color:#111">Tablet</div>
<svg style="left:353px;top:346.6px" width="9" height="8" viewBox="0 0 9 8"><path d="M.5.3v7.4M1.2 1.5h4.8v5H1.2zM6.8.3v7.4M8.3.5v2M8.3 3v2M8.3 5.5v2" stroke="#333" stroke-width=".8" fill="none"/></svg>
<div class="t e y" style="left:370.8px;top:347.2px;font-size:7.5px;color:#111">Multitasking</div>
<svg style="left:353px;top:373.0px" width="9" height="8" viewBox="0 0 9 8"><path d="M2.2 2.5V.5h6v4h-2M.5 2.5h5.5v4H.5z" stroke="#333" stroke-width=".8" fill="none"/></svg>
<div class="t e y" style="left:370.8px;top:373.6px;font-size:7.5px;color:#111">Projecting to th</div>
<svg style="left:353px;top:399.0px" width="9" height="8" viewBox="0 0 9 8"><path d="M.8 3.2l2.6 2.3-2.6 2.3M8.3 1.2L5.8 3.3 8.3 5.4" stroke="#333" stroke-width=".8" fill="none"/></svg>
<div class="t e y" style="left:370.8px;top:399.6px;font-size:7.5px;color:#111">Remote Deskto</div>
<svg style="left:353px;top:426.0px" width="9" height="8" viewBox="0 0 9 8"><circle cx="4.5" cy="4" r="3.7" stroke="#333" stroke-width=".8" fill="none"/><path d="M4.5 3.2v2.8" stroke="#333" stroke-width=".8"/><circle cx="4.5" cy="2" r=".5" fill="#333"/></svg>
<div class="t e y" style="left:370.8px;top:426.6px;font-size:7.5px;color:#111">About</div>
<div class="a" style="left:344px;top:423px;width:3px;height:13.5px;background:#0078d7"></div>

<div class="t" style="left:535.6px;top:114.8px;font-size:15.7px;color:#2a2a2a">About</div>
<div class="t d y" style="left:535.6px;top:148px;font-size:7.7px;color:#111">Edition</div>
<div class="t d y" style="left:599px;top:148px;font-size:7.7px;color:#777">Windows Server</div>
<div class="t e y" style="left:535.4px;top:416.6px;font-size:7.45px;color:#1670cc">Rename this PC (advanced)</div>
<div class="t e y" style="left:535.4px;top:438.7px;font-size:7.6px;color:#1670cc">Graphics settings</div>
<div class="a" style="left:420px;top:154px;width:226px;height:261px;background:#f0f0f0;border:1px solid #a8a8a8;border-top-color:#c4c4c4;box-shadow:0 0 6px 2px rgba(0,0,0,.16)"></div>
<div class="a" style="left:421px;top:155px;width:224px;height:15.5px;background:#fff;"></div>
<div class="t e y" style="left:425.5px;top:160.3px;font-size:6.38px;color:#a0a0a0;">System Properties</div>
<svg style="left:634px;top:159.5px" width="6" height="6" viewBox="0 0 6 6"><path d="M.2.2l5.6 5.6M5.8.2L.2 5.8" stroke="#999" stroke-width=".7"/></svg>
<div class="a" style="left:424.6px;top:186.7px;width:216.60000000000002px;height:206.0px;background:#fff;border:1px solid #d9d9d9;"></div>
<div class="a" style="left:424.8px;top:176.2px;width:49.5px;height:10.800000000000011px;background:#f0f0f0;border:1px solid #d9d9d9;"></div>
<div class="t e y" style="left:424.8px;width:49.5px;text-align:center;top:179.77px;font-size:5.7px;color:#111">Computer Name</div>
<div class="a" style="left:474.3px;top:176.2px;width:31.69999999999999px;height:10.800000000000011px;background:#f0f0f0;border:1px solid #d9d9d9;"></div>
<div class="t e y" style="left:474.3px;width:31.69999999999999px;text-align:center;top:179.73px;font-size:5.77px;color:#111">Hardware</div>
<div class="a" style="left:541px;top:176.2px;width:25.399999999999977px;height:10.800000000000011px;background:#f0f0f0;border:1px solid #d9d9d9;"></div>
<div class="t e y" style="left:541px;width:25.399999999999977px;text-align:center;top:179.71px;font-size:5.8px;color:#111">Remote</div>
<div class="a" style="left:506px;top:174.3px;width:35.5px;height:13.399999999999977px;background:#fff;border:1px solid #d9d9d9;border-bottom:none"></div>
<div class="t e y" style="left:506px;width:35.5px;text-align:center;top:178.26px;font-size:6.07px;color:#111">Advanced</div>
<div class="t e y" style="left:434.8px;top:196.75px;font-size:5.9px;color:#111;">You must be logged on as an Administrator to make most of these changes.</div>
<div class="a" style="left:432.6px;top:211px;width:202.0px;height:43px;background:transparent;border:1px solid #dcdcdc;"></div>
<div class="a" style="left:436px;top:209px;width:36.30000000000001px;height:4px;background:#fff;"></div>
<div class="t e y" style="left:437.6px;top:209.88px;font-size:5.85px;color:#111;">Performance</div>
<div class="t e y" style="left:438.5px;top:219.99px;font-size:5.83px;color:#111;">Visual effects, processor scheduling, memory usage, and virtual memory</div>
<div class="a" style="left:588.8px;top:237.2px;width:40.0px;height:11.600000000000023px;background:#e1e1e1;border:1px solid #adadad;"></div>
<div class="t e y" style="left:588.8px;width:40.0px;text-align:center;top:241.08px;font-size:5.85px;color:#111">Settings...</div>
<div class="a" style="left:432.6px;top:262.8px;width:202.0px;height:43.099999999999966px;background:transparent;border:1px solid #dcdcdc;"></div>
<div class="a" style="left:436px;top:260.8px;width:35.69999999999999px;height:4.0px;background:#fff;"></div>
<div class="t e y" style="left:437.6px;top:261.68px;font-size:5.85px;color:#111;">User Profiles</div>
<div class="t e y" style="left:438.5px;top:271.79px;font-size:5.83px;color:#111;">Desktop settings related to your sign-in</div>
<div class="a" style="left:588.3px;top:288.3px;width:40.60000000000002px;height:11.800000000000011px;background:#e1e1e1;border:1px solid #adadad;"></div>
<div class="t e y" style="left:588.3px;width:40.60000000000002px;text-align:center;top:292.28px;font-size:5.85px;color:#111">Settings...</div>
<div class="a" style="left:432.6px;top:314.8px;width:202.0px;height:42.80000000000001px;background:transparent;border:1px solid #dcdcdc;"></div>
<div class="a" style="left:436px;top:312.8px;width:60.39999999999998px;height:4.0px;background:#fff;"></div>
<div class="t e y" style="left:437.6px;top:313.68px;font-size:5.85px;color:#111;">Startup and Recovery</div>
<div class="t e y" style="left:438.5px;top:323.79px;font-size:5.83px;color:#111;">System startup, system failure, and debugging information</div>
<div class="a" style="left:588.3px;top:340.3px;width:40.60000000000002px;height:11.800000000000011px;background:#e1e1e1;border:1px solid #adadad;"></div>
<div class="t e y" style="left:588.3px;width:40.60000000000002px;text-align:center;top:344.28px;font-size:5.85px;color:#111">Settings...</div>
<div class="a" style="left:564px;top:365.9px;width:70.29999999999995px;height:11.800000000000011px;background:#e1e1e1;border:1px solid #adadad;"></div>
<div class="t e y" style="left:564px;width:70.29999999999995px;text-align:center;top:369.83px;font-size:5.95px;color:#111">Environment Variables...</div>
<div class="a" style="left:511.4px;top:397.8px;width:40.200000000000045px;height:11.800000000000011px;background:#e1e1e1;border:1px solid #adadad;"></div>
<div class="t e y" style="left:511.4px;width:40.200000000000045px;text-align:center;top:401.70px;font-size:6.0px;color:#111">OK</div>
<div class="a" style="left:556px;top:397.8px;width:41px;height:11.800000000000011px;background:#e1e1e1;border:1px solid #adadad;"></div>
<div class="t e y" style="left:556px;width:41px;text-align:center;top:401.70px;font-size:6.0px;color:#111">Cancel</div>
<div class="a" style="left:601.4px;top:397.8px;width:40.200000000000045px;height:11.800000000000011px;background:#cccccc;border:1px solid #cccccc;"></div>
<div class="t e y" style="left:601.4px;width:40.200000000000045px;text-align:center;top:401.81px;font-size:5.8px;color:#8a8a8a">Apply</div>

<div class="a" style="left:647px;top:131px;width:233px;height:336px;background:#f0f0f0;border:1px solid #8e8e8e;box-shadow:0 1px 8px 2px rgba(0,0,0,.22)"></div>
<div class="a" style="left:648px;top:132px;width:231px;height:17.5px;background:#fff;"></div>
<div class="t d y" style="left:652px;top:138.03px;font-size:6.67px;color:#111;">Performance Options</div>
<svg style="left:867.5px;top:136.8px" width="7" height="7" viewBox="0 0 7 7"><path d="M.3.3l6.4 6.4M6.7.3L.3 6.7" stroke="#222" stroke-width=".8"/></svg>
<div class="a" style="left:652.7px;top:164.3px;width:222.29999999999995px;height:280.5px;background:#fff;border:1px solid #d9d9d9;"></div>
<div class="a" style="left:695px;top:155px;width:32.39999999999998px;height:9.800000000000011px;background:#f0f0f0;border:1px solid #d9d9d9;"></div>
<div class="t d y" style="left:695px;width:32.39999999999998px;text-align:center;top:157.70px;font-size:6.0px;color:#111">Advanced</div>
<div class="a" style="left:727.4px;top:155px;width:77.20000000000005px;height:9.800000000000011px;background:#f0f0f0;border:1px solid #d9d9d9;"></div>
<div class="t d y" style="left:727.4px;width:77.20000000000005px;text-align:center;top:157.68px;font-size:6.03px;color:#111">Data Execution Prevention</div>
<div class="a" style="left:652.7px;top:153.2px;width:42.799999999999955px;height:12.100000000000023px;background:#fff;border:1px solid #d9d9d9;border-bottom:none"></div>
<div class="t d y" style="left:652.7px;width:42.799999999999955px;text-align:center;top:156.56px;font-size:5.9px;color:#111">Visual Effects</div>
<div class="t d y" style="left:659.8px;top:173.07px;font-size:6.6px;color:#111;">Select the settings you want to use for the appearance and</div>
<div class="t d y" style="left:659.8px;top:181.87px;font-size:6.6px;color:#111;">performance of Windows on this computer.</div>
<div class="a" style="left:659.5px;top:199.2px;width:7.6px;height:7.6px;border-radius:50%;border:0.8px solid #333;background:#fff"></div>
<div class="t d y" style="left:668.6px;top:200.37px;font-size:6.6px;color:#111;">Let Windows choose what's best for my computer</div>
<div class="a" style="left:659.5px;top:211.9px;width:7.6px;height:7.6px;border-radius:50%;border:0.8px solid #333;background:#fff"></div>
<div class="a" style="left:661.5px;top:213.9px;width:3.6px;height:3.6px;border-radius:50%;background:#111"></div>
<div class="t d y" style="left:668.6px;top:213.07px;font-size:6.6px;color:#111;">Adjust for best appearance</div>
<div class="a" style="left:659.5px;top:224.4px;width:7.6px;height:7.6px;border-radius:50%;border:0.8px solid #333;background:#fff"></div>
<div class="t d y" style="left:668.6px;top:225.57px;font-size:6.6px;color:#111;">Adjust for best performance</div>
<div class="a" style="left:659.5px;top:237.0px;width:7.6px;height:7.6px;border-radius:50%;border:0.8px solid #333;background:#fff"></div>
<div class="t d y" style="left:668.6px;top:238.17px;font-size:6.6px;color:#111;">Custom:</div>
<div class="a" style="left:659.8px;top:248.6px;width:207.70000000000005px;height:187.6px;background:#fff;border:1px solid #a2a2a2;"></div>
<div class="a" style="left:662.3px;top:251.10px;width:7.8px;height:7.4px;border:0.8px solid #555;background:#fff"></div>
<svg style="left:663.4px;top:251.40px" width="6" height="5.5" viewBox="0 0 6 5.5"><path d="M.5 2.7l1.8 1.9L5.6.6" stroke="#333" stroke-width="1" fill="none"/></svg>
<div class="t d y" style="left:673px;top:252.02px;font-size:6.72px;color:#111;">Animate controls and elements inside windows</div>
<div class="a" style="left:662.3px;top:261.14px;width:7.8px;height:7.4px;border:0.8px solid #555;background:#fff"></div>
<svg style="left:663.4px;top:261.44px" width="6" height="5.5" viewBox="0 0 6 5.5"><path d="M.5 2.7l1.8 1.9L5.6.6" stroke="#333" stroke-width="1" fill="none"/></svg>
<div class="t d y" style="left:673px;top:262.06px;font-size:6.72px;color:#111;">Animate windows when minimizing and maximizing</div>
<div class="a" style="left:662.3px;top:271.18px;width:7.8px;height:7.4px;border:0.8px solid #555;background:#fff"></div>
<svg style="left:663.4px;top:271.48px" width="6" height="5.5" viewBox="0 0 6 5.5"><path d="M.5 2.7l1.8 1.9L5.6.6" stroke="#333" stroke-width="1" fill="none"/></svg>
<div class="t d y" style="left:673px;top:272.10px;font-size:6.72px;color:#111;">Animations in the taskbar</div>
<div class="a" style="left:662.3px;top:281.22px;width:7.8px;height:7.4px;border:0.8px solid #555;background:#fff"></div>
<svg style="left:663.4px;top:281.52px" width="6" height="5.5" viewBox="0 0 6 5.5"><path d="M.5 2.7l1.8 1.9L5.6.6" stroke="#333" stroke-width="1" fill="none"/></svg>
<div class="t d y" style="left:673px;top:282.14px;font-size:6.72px;color:#111;">Enable Peek</div>
<div class="a" style="left:662.3px;top:291.26px;width:7.8px;height:7.4px;border:0.8px solid #555;background:#fff"></div>
<svg style="left:663.4px;top:291.56px" width="6" height="5.5" viewBox="0 0 6 5.5"><path d="M.5 2.7l1.8 1.9L5.6.6" stroke="#333" stroke-width="1" fill="none"/></svg>
<div class="t d y" style="left:673px;top:292.18px;font-size:6.72px;color:#111;">Fade or slide menus into view</div>
<div class="a" style="left:662.3px;top:301.30px;width:7.8px;height:7.4px;border:0.8px solid #555;background:#fff"></div>
<svg style="left:663.4px;top:301.60px" width="6" height="5.5" viewBox="0 0 6 5.5"><path d="M.5 2.7l1.8 1.9L5.6.6" stroke="#333" stroke-width="1" fill="none"/></svg>
<div class="t d y" style="left:673px;top:302.22px;font-size:6.72px;color:#111;">Fade or slide ToolTips into view</div>
<div class="a" style="left:662.3px;top:311.34px;width:7.8px;height:7.4px;border:0.8px solid #555;background:#fff"></div>
<svg style="left:663.4px;top:311.64px" width="6" height="5.5" viewBox="0 0 6 5.5"><path d="M.5 2.7l1.8 1.9L5.6.6" stroke="#333" stroke-width="1" fill="none"/></svg>
<div class="t d y" style="left:673px;top:312.26px;font-size:6.72px;color:#111;">Fade out menu items after clicking</div>
<div class="a" style="left:662.3px;top:321.38px;width:7.8px;height:7.4px;border:0.8px solid #555;background:#fff"></div>
<svg style="left:663.4px;top:321.68px" width="6" height="5.5" viewBox="0 0 6 5.5"><path d="M.5 2.7l1.8 1.9L5.6.6" stroke="#333" stroke-width="1" fill="none"/></svg>
<div class="t d y" style="left:673px;top:322.30px;font-size:6.72px;color:#111;">Save taskbar thumbnail previews</div>
<div class="a" style="left:662.3px;top:331.42px;width:7.8px;height:7.4px;border:0.8px solid #555;background:#fff"></div>
<svg style="left:663.4px;top:331.72px" width="6" height="5.5" viewBox="0 0 6 5.5"><path d="M.5 2.7l1.8 1.9L5.6.6" stroke="#333" stroke-width="1" fill="none"/></svg>
<div class="t d y" style="left:673px;top:332.34px;font-size:6.72px;color:#111;">Show shadows under mouse pointer</div>
<div class="a" style="left:662.3px;top:341.46px;width:7.8px;height:7.4px;border:0.8px solid #555;background:#fff"></div>
<svg style="left:663.4px;top:341.76px" width="6" height="5.5" viewBox="0 0 6 5.5"><path d="M.5 2.7l1.8 1.9L5.6.6" stroke="#333" stroke-width="1" fill="none"/></svg>
<div class="t d y" style="left:673px;top:342.38px;font-size:6.72px;color:#111;">Show shadows under windows</div>
<div class="a" style="left:662.3px;top:351.50px;width:7.8px;height:7.4px;border:0.8px solid #555;background:#fff"></div>
<svg style="left:663.4px;top:351.80px" width="6" height="5.5" viewBox="0 0 6 5.5"><path d="M.5 2.7l1.8 1.9L5.6.6" stroke="#333" stroke-width="1" fill="none"/></svg>
<div class="t d y" style="left:673px;top:352.42px;font-size:6.72px;color:#111;">Show thumbnails instead of icons</div>
<div class="a" style="left:662.3px;top:361.54px;width:7.8px;height:7.4px;border:0.8px solid #555;background:#fff"></div>
<svg style="left:663.4px;top:361.84px" width="6" height="5.5" viewBox="0 0 6 5.5"><path d="M.5 2.7l1.8 1.9L5.6.6" stroke="#333" stroke-width="1" fill="none"/></svg>
<div class="t d y" style="left:673px;top:362.46px;font-size:6.72px;color:#111;">Show translucent selection rectangle</div>
<div class="a" style="left:662.3px;top:371.58px;width:7.8px;height:7.4px;border:0.8px solid #555;background:#fff"></div>
<svg style="left:663.4px;top:371.88px" width="6" height="5.5" viewBox="0 0 6 5.5"><path d="M.5 2.7l1.8 1.9L5.6.6" stroke="#333" stroke-width="1" fill="none"/></svg>
<div class="t d y" style="left:673px;top:372.50px;font-size:6.72px;color:#111;">Show window contents while dragging</div>
<div class="a" style="left:662.3px;top:381.62px;width:7.8px;height:7.4px;border:0.8px solid #555;background:#fff"></div>
<svg style="left:663.4px;top:381.92px" width="6" height="5.5" viewBox="0 0 6 5.5"><path d="M.5 2.7l1.8 1.9L5.6.6" stroke="#333" stroke-width="1" fill="none"/></svg>
<div class="t d y" style="left:673px;top:382.54px;font-size:6.72px;color:#111;">Slide open combo boxes</div>
<div class="a" style="left:662.3px;top:391.66px;width:7.8px;height:7.4px;border:0.8px solid #555;background:#fff"></div>
<svg style="left:663.4px;top:391.96px" width="6" height="5.5" viewBox="0 0 6 5.5"><path d="M.5 2.7l1.8 1.9L5.6.6" stroke="#333" stroke-width="1" fill="none"/></svg>
<div class="t d y" style="left:673px;top:392.58px;font-size:6.72px;color:#111;">Smooth edges of screen fonts</div>
<div class="a" style="left:662.3px;top:401.70px;width:7.8px;height:7.4px;border:0.8px solid #555;background:#fff"></div>
<svg style="left:663.4px;top:402.00px" width="6" height="5.5" viewBox="0 0 6 5.5"><path d="M.5 2.7l1.8 1.9L5.6.6" stroke="#333" stroke-width="1" fill="none"/></svg>
<div class="t d y" style="left:673px;top:402.62px;font-size:6.72px;color:#111;">Smooth-scroll list boxes</div>
<div class="a" style="left:662.3px;top:411.74px;width:7.8px;height:7.4px;border:0.8px solid #555;background:#fff"></div>
<svg style="left:663.4px;top:412.04px" width="6" height="5.5" viewBox="0 0 6 5.5"><path d="M.5 2.7l1.8 1.9L5.6.6" stroke="#333" stroke-width="1" fill="none"/></svg>
<div class="t d y" style="left:673px;top:412.66px;font-size:6.72px;color:#111;">Use drop shadows for icon labels on the desktop</div>
<div class="a" style="left:745px;top:450.9px;width:40.89999999999998px;height:11.0px;background:#e1e1e1;border:1px solid #0078d7;"></div>
<div class="t d y" style="left:745px;width:40.89999999999998px;text-align:center;top:453.99px;font-size:6.2px;color:#111">OK</div>
<div class="a" style="left:790px;top:450.9px;width:40.60000000000002px;height:11.0px;background:#e1e1e1;border:1px solid #adadad;"></div>
<div class="t d y" style="left:790px;width:40.60000000000002px;text-align:center;top:453.99px;font-size:6.2px;color:#111">Cancel</div>
<div class="a" style="left:835px;top:450.9px;width:40.799999999999955px;height:11.0px;background:#cccccc;border:1px solid #cccccc;"></div>
<div class="t d y" style="left:835px;width:40.799999999999955px;text-align:center;top:454.10px;font-size:6.0px;color:#8a8a8a">Apply</div>


<!-- taskbar -->
<div class="a" style="left:344px;top:487px;width:570px;height:22px;background:#03121f"></div>
<svg style="left:352.5px;top:493.5px" width="10" height="10" viewBox="0 0 10 10"><path d="M.3 1.5L3.8 1.1v3.5H.3zM4.5 1L9.6.4v4.2H4.5zM.3 5.3h3.5v3.5L.3 8.5zM4.5 5.3h5.1v4.2L4.5 8.9z" fill="#fff"/></svg>
<div class="a" style="left:371px;top:487px;width:178px;height:22px;background:#f0f0f0"></div>
<svg style="left:377.5px;top:494px" width="9" height="9" viewBox="0 0 9 9"><circle cx="5.6" cy="3.4" r="2.6" stroke="#333" stroke-width=".8" fill="none"/><path d="M3.7 5.3L.6 8.4" stroke="#333" stroke-width=".9"/></svg>
<div class="t y" style="left:393.2px;top:495px;font-size:8.08px;color:#3a3a3a">Type here to search</div>
<!-- task view -->
<svg style="left:557.5px;top:494px" width="10" height="9" viewBox="0 0 10 9"><path d="M.5.5v8M.5 1.5h6v6h-6M8.5.5v2.5M8.5 3.8v1.4M8.5 6v2.5" stroke="#ddd" stroke-width=".9" fill="none"/></svg>
<!-- edge -->
<svg style="left:584px;top:491.5px" width="14" height="14" viewBox="0 0 14 14"><circle cx="7" cy="7" r="6.6" fill="#1f7fd0"/><path d="M1.2 5A6.4 6.4 0 0 1 12.8 5.6z" fill="#35b0d8"/><path d="M12.9 5.2A6.6 6.6 0 0 1 9.6 13C11.6 11 11 8.6 9 8.2L8.6 5.4z" fill="#4cc65e"/><circle cx="7" cy="8.3" r="2.4" fill="#03121f"/><path d="M2 9.5c.8 2.3 3 3.6 5.4 3.5" stroke="#1565b0" stroke-width="1" fill="none"/></svg>
<!-- explorer -->
<svg style="left:611.5px;top:492.5px" width="13" height="12" viewBox="0 0 13 12"><path d="M.3.5h4l1 1H12V10.8H.3z" fill="#e9a53a"/><rect x=".3" y="2.2" width="12" height="8.6" fill="#fcd35c"/><path d="M3.6 10.8V6h5.2v4.8H7.4V7.4H5v3.4z" fill="#3a94e0"/></svg>
<div class="a" style="left:607px;top:507.8px;width:22px;height:1.8px;background:#5a8bb8"></div>
<!-- server manager -->
<svg style="left:638.5px;top:493px" width="13" height="10" viewBox="0 0 13 10"><path d="M.5 6.5L8 1.5l4.5 2.2-7.5 5z" fill="#e8d48a"/><path d="M.5 6.5L5 8.7 5 9.8.5 7.6z" fill="#9a7b30"/><path d="M5 8.7l7.5-5v1.1L5 9.8z" fill="#c9a440"/><path d="M3 5.8l5-3.2" stroke="#a08030" stroke-width=".6"/></svg>
<!-- powershell -->
<svg style="left:665.5px;top:492.5px" width="14" height="12" viewBox="0 0 14 12"><path d="M2.5.5h11L11.5 11.5H.5z" fill="#2671be"/><path d="M3.3 3l3.2 2.6-4 2.6" stroke="#fff" stroke-width="1" fill="none"/><path d="M6.5 8.8h3" stroke="#fff" stroke-width=".9"/></svg>
<!-- settings gear -->
<svg style="left:693px;top:491.5px" width="14" height="14" viewBox="0 0 14 14"><circle cx="7" cy="7" r="4.6" stroke="#c7c7c7" stroke-width="3.2" stroke-dasharray="2.2 1.4" fill="none"/><circle cx="7" cy="7" r="4.2" stroke="#c7c7c7" stroke-width="2" fill="none"/><circle cx="7" cy="7" r="2.3" fill="#2f7fd8"/></svg>
<div class="a" style="left:689px;top:507.8px;width:22px;height:1.8px;background:#5a8bb8"></div>
<!-- active system props -->
<div class="a" style="left:714px;top:487px;width:26.5px;height:22px;background:#27323d"></div>
<svg style="left:720px;top:491.5px" width="14" height="13" viewBox="0 0 14 13"><rect x="4" y=".5" width="9" height="7" fill="#d6dbe2" stroke="#889" stroke-width=".5"/><rect x="5" y="1.5" width="7" height="5" fill="#2a6fd0"/><path d="M.5 4.5c1-.8 2.5-.8 3.5 0v6.5c-1-.6-2.5-.6-3.5 0z" fill="#bbc"/><path d="M3 11.5h9" stroke="#ccd" stroke-width="1.5"/></svg>
<div class="a" style="left:714px;top:507.8px;width:26.5px;height:1.8px;background:#5a8bb8"></div>
<!-- tray -->
<div class="a" style="left:809.4px;top:487px;width:13px;height:22px;background:#1b2836"></div>
<svg style="left:812.5px;top:494px" width="7" height="10" viewBox="0 0 7 10"><path d="M.5.5v8l2-1.8 1.5 3 1-.5-1.4-2.9h2.8z" fill="#fff" stroke="#222" stroke-width=".4"/></svg>
<svg style="left:824px;top:494.5px" width="11" height="9" viewBox="0 0 11 9"><rect x="2.5" y=".5" width="8" height="5.5" stroke="#ddd" stroke-width=".8" fill="none"/><path d="M4.5 8h4M6.5 6v2M.5 1.5h1.5v6" stroke="#ddd" stroke-width=".8" fill="none"/></svg>
<svg style="left:838px;top:494px" width="10" height="10" viewBox="0 0 10 10"><path d="M.5 3h1.5l2-2v7.5l-2-2H.5z" stroke="#ddd" stroke-width=".7" fill="none"/><circle cx="6.8" cy="6.8" r="2.6" fill="#e81123"/><path d="M5.8 5.8l2 2M7.8 5.8l-2 2" stroke="#fff" stroke-width=".6"/></svg>
<div class="t" style="left:854px;top:490.8px;font-size:6.65px;color:#fff">3:50 PM</div>
<div class="t" style="left:852.2px;top:500.3px;font-size:6.65px;color:#fff">9/11/2024</div>
<svg style="left:891.5px;top:493.5px" width="14" height="14" viewBox="0 0 14 14"><path d="M.5.5h9v6.5H5L3 9V7H.5z" fill="#fff" stroke="#fff" stroke-width=".5"/><path d="M2 2.3h6M2 3.8h6M2 5.3h6" stroke="#03121f" stroke-width=".6"/><circle cx="9.5" cy="9.5" r="3.6" fill="#2b2b2b" stroke="#bbb" stroke-width=".7"/><text x="9.5" y="11.6" font-size="5.5" font-weight="bold" text-anchor="middle" fill="#fff" font-family="Liberation Sans">2</text></svg>
<div class="a" style="left:911px;top:487px;width:1px;height:22px;background:#445566"></div>
<!-- tooltip -->
<div class="a" style="left:813px;top:482.5px;width:62.7px;height:10.5px;background:#fff;border:1px solid #909090"></div>
<div class="t" style="left:816.5px;top:484.5px;font-size:6.61px;color:#555">Show hidden icons</div>



</body></html>
